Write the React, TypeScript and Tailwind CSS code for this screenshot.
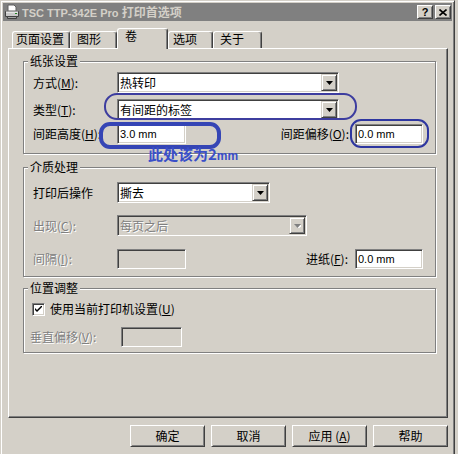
import React from 'react';

const cjk = "font-['Noto_Sans_CJK_SC',sans-serif]";
const latin = "font-['Liberation_Sans','Noto_Sans_CJK_SC',sans-serif]";
const sunken =
  'border border-t-[#808080] border-l-[#808080] border-r-white border-b-white shadow-[inset_1px_1px_0_#404040,inset_-1px_-1px_0_#d4d0c8] p-[1px]';
const raised =
  'border border-t-white border-l-white border-r-[#404040] border-b-[#404040] shadow-[inset_1px_1px_0_#d4d0c8,inset_-1px_-1px_0_#808080]';
const raisedArrow =
  'border border-t-[#d4d0c8] border-l-[#d4d0c8] border-r-[#404040] border-b-[#404040] shadow-[inset_1px_1px_0_#fff,inset_-1px_-1px_0_#808080]';
const dim = 'text-[#808080] [text-shadow:1px_1px_0_#fff]';

const Key: React.FC<{ k: string }> = ({ k }) => <span className="underline underline-offset-[1px]">{k}</span>;

const Label: React.FC<{ children: React.ReactNode; disabled?: boolean; className?: string }> = ({
  children,
  disabled,
  className = '',
}) => (
  <span className={`shrink-0 whitespace-nowrap text-[12px] leading-[14px] ${disabled ? dim : ''} ${className}`}>
    {children}
  </span>
);

const Combo: React.FC<{ value: string; className: string; disabled?: boolean }> = ({ value, className, disabled }) => (
  <div className={`flex h-[21px] items-stretch ${sunken} ${disabled ? 'bg-[#d4d0c8]' : 'bg-white'} ${className}`}>
    <span className={`flex flex-1 items-center pl-[1px] text-[12px] leading-[14px] ${disabled ? dim : ''}`}>{value}</span>
    <span className={`flex w-[16px] items-center justify-center bg-[#d4d0c8] ${raisedArrow}`}>
      <svg width="7" height="4" viewBox="0 0 7 4">
        {disabled && <path d="M1 1h7L4.5 5z" fill="#fff" />}
        <path d="M0 0h7L3.5 4z" fill={disabled ? '#808080' : '#000'} />
      </svg>
    </span>
  </div>
);

const Field: React.FC<{ value?: string; className: string; disabled?: boolean }> = ({ value, className, disabled }) => (
  <div
    className={`flex h-[20px] items-center ${sunken} ${disabled ? 'bg-[#d4d0c8]' : 'bg-white'} pl-[2px] text-[11px] leading-[13px] ${latin} ${className}`}
  >
    {value}
  </div>
);

const Group: React.FC<{ title: string; className?: string; children: React.ReactNode }> = ({
  title,
  className = '',
  children,
}) => (
  <fieldset className={`w-[413px] border border-[#808080] shadow-[inset_1px_1px_0_#fff,1px_1px_0_#fff] ${className}`}>
    <legend className="ml-[4px] bg-[#d4d0c8] px-[2px] text-[12px] leading-[14px]">{title}</legend>
    {children}
  </fieldset>
);

const PrinterIcon = () => (
  <svg width="16" height="16" viewBox="0 0 16 16">
    <path d="M4 1h6l2 2v4H4z" fill="#fff" stroke="#606060" />
    <path d="M1.5 7.5h13v5h-13z" fill="#c8c8c8" stroke="#404040" />
    <path d="M2 8h12" stroke="#fff" />
    <path d="M3.5 12.5h9v2h-9z" fill="#a0a0a0" stroke="#404040" />
    <path d="M11 9.5h2" stroke="#208020" />
  </svg>
);

const tabs = [
  { label: '页面设置', w: 'w-[58px]', pl: 'pl-[3px]' },
  { label: '图形', w: 'w-[47px]', pl: 'pl-[6px]' },
  { label: '卷', w: 'w-[51px]', pl: 'pl-[7px]', active: true },
  { label: '选项', w: 'w-[45px]', pl: 'pl-[4px]' },
  { label: '关于', w: 'w-[49px]', pl: 'pl-[6px]' },
];

export default function App() {
  return (
    <div className={`relative h-[454px] w-[458px] overflow-hidden bg-[#d4d0c8] text-black ${cjk}`}>
      <div className="h-[470px] w-[455px] border border-t-[#d4d0c8] border-l-[#d4d0c8] border-r-[#404040] border-b-[#404040] p-[2px] shadow-[inset_1px_1px_0_#fff,inset_-1px_-1px_0_#808080]">
        {/* title bar */}
        <div className="flex h-[18px] items-center bg-[#808080] pl-[1px] pr-[1px]">
          <PrinterIcon />
          <span className={`ml-[2px] whitespace-nowrap text-[11px] font-bold leading-[14px] text-[#d4d0c8] ${latin}`}>
            TSC TTP-342E Pro <span className={`text-[12px] ${cjk}`}>打印首选项</span>
          </span>
          <div className="ml-auto flex gap-[2px]">
            <div className={`flex h-[14px] w-[16px] items-center justify-center bg-[#d4d0c8] ${raised}`}>
              <span className={`text-[11px] font-bold leading-[11px] ${latin}`}>?</span>
            </div>
            <div className={`flex h-[14px] w-[16px] items-center justify-center bg-[#d4d0c8] ${raised}`}>
              <svg width="8" height="7" viewBox="0 0 8 7">
                <path d="M0.5 0.5l7 6M7.5 0.5l-7 6" stroke="#000" strokeWidth="1.6" />
              </svg>
            </div>
          </div>
        </div>

        <div className="pl-[5px]">
          {/* tabs */}
          <div className="relative z-10 mt-[7px] flex h-[20px] items-end pl-[4px]">
            {tabs.map((t) =>
              t.active ? (
                <div
                  key={t.label}
                  className={`mb-[-1px] h-[21px] ${t.w} ${t.pl} rounded-t-[3px] border-l border-t border-r border-l-white border-t-white border-r-[#404040] bg-[#d4d0c8] text-[12px] leading-[14px] shadow-[inset_-1px_0_0_#808080]`}
                >
                  {t.label}
                </div>
              ) : (
                <div
                  key={t.label}
                  className={`h-[17px] ${t.w} ${t.pl} rounded-t-[3px] border-l border-t border-r border-l-white border-t-white border-r-[#404040] text-[12px] leading-[14px] shadow-[inset_-1px_0_0_#808080]`}
                >
                  {t.label}
                </div>
              ),
            )}
          </div>

          {/* tab panel */}
          <div className="h-[370px] w-[440px] border border-t-white border-l-white border-r-[#404040] border-b-[#404040] pl-[14px] pt-[5px] shadow-[inset_-1px_-1px_0_#808080]">
            <Group title="纸张设置">
              <div className="flex flex-col pb-[9px] pl-[9px] pt-[4px]">
                <div className="flex items-center">
                  <Label className="w-[84px]">
                    方式(<Key k="M" />):
                  </Label>
                  <Combo value="热转印" className="w-[222px]" />
                </div>
                <div className="mt-[6px] flex items-center">
                  <Label className="w-[84px]">
                    类型(<Key k="T" />):
                  </Label>
                  <Combo value="有间距的标签" className="w-[222px]" />
                </div>
                <div className="mt-[4px] flex items-center">
                  <Label className="w-[84px]">
                    间距高度(<Key k="H" />):
                  </Label>
                  <Field value="3.0 mm" className="w-[69px]" />
                  <div className="ml-auto mr-[12px] flex items-center gap-[6px]">
                    <Label>
                      间距偏移(<Key k="O" />):
                    </Label>
                    <Field value="0.0 mm" className="w-[68px]" />
                  </div>
                </div>
              </div>
            </Group>

            <Group title="介质处理" className="mt-[6px]">
              <div className="flex flex-col pb-[7px] pl-[9px] pt-[8px]">
                <div className="flex items-center">
                  <Label className="w-[84px]">打印后操作</Label>
                  <Combo value="撕去" className="w-[153px]" />
                </div>
                <div className="mt-[12px] flex items-center">
                  <Label disabled className="w-[84px]">
                    出现(<Key k="C" />):
                  </Label>
                  <Combo disabled value="每页之后" className="w-[190px]" />
                </div>
                <div className="mt-[13px] flex items-center">
                  <Label disabled className="w-[84px]">
                    间隔(<Key k="I" />):
                  </Label>
                  <Field disabled className="w-[69px]" />
                  <div className="ml-auto mr-[12px] flex items-center gap-[7px]">
                    <Label>
                      进纸(<Key k="F" />):
                    </Label>
                    <Field value="0.0 mm" className="w-[68px]" />
                  </div>
                </div>
              </div>
            </Group>

            <Group title="位置调整" className="mt-[4px]">
              <div className="flex flex-col pb-[5px] pl-[8px] pt-[7px]">
                <div className="flex h-[14px] items-center">
                  <div className={`flex h-[13px] w-[13px] items-center justify-center bg-white ${sunken}`}>
                    <svg width="7" height="7" viewBox="0 0 7 7">
                      <path d="M0 2v2l2 2 5-5V-1L2 4z" fill="#000" />
                    </svg>
                  </div>
                  <Label className="ml-[5px]">
                    使用当前打印机设置(<Key k="U" />)
                  </Label>
                </div>
                <div className="ml-[-2px] mt-[11px] flex items-center">
                  <Label disabled className="w-[91px]">
                    垂直偏移(<Key k="V" />):
                  </Label>
                  <Field disabled className="w-[61px]" />
                </div>
              </div>
            </Group>
          </div>

          {/* dialog buttons */}
          <div className="mt-[7px] flex w-[440px] justify-end gap-[6px]">
            {[
              <>确定</>,
              <>取消</>,
              <>
                应用 (<Key k="A" />)
              </>,
              <>帮助</>,
            ].map((b, i) => (
              <div
                key={i}
                className={`flex h-[22px] w-[75px] items-center justify-center text-[12px] leading-[14px] ${raised}`}
              >
                {b}
              </div>
            ))}
          </div>
        </div>
      </div>

      {/* hand-drawn annotations over the dialog */}
      <div className="absolute left-[104px] top-[93px] h-[27px] w-[253px] rounded-[13px] border-2 border-[#3d3d9f]" />
      <div className="absolute left-[99px] top-[122px] h-[27px] w-[122px] rounded-[11px] border-4 border-[#3545b5]" />
      <div className="absolute left-[350px] top-[119px] h-[29px] w-[79px] rounded-[11px] border-2 border-[#2e36a0]" />
      <div className="absolute left-[148px] top-[145px] whitespace-nowrap text-[15px] font-bold leading-[17px] text-[#3a4fc8]">
        此处该为2<span className={`text-[12px] ${latin}`}>mm</span>
      </div>
    </div>
  );
}
